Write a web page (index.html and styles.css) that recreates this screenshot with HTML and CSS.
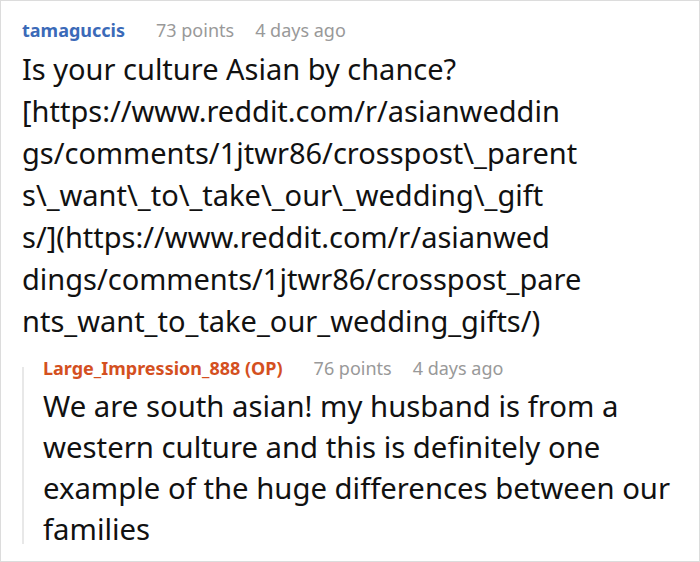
FILE: index.html
```html
<!DOCTYPE html>
<html lang="en">
<head>
<meta charset="utf-8">
<title>Comments</title>
<link rel="stylesheet" href="styles.css">
</head>
<body>
<div class="thread">
  <div class="comment">
    <div class="meta">
      <span class="author">tamaguccis</span>
      <span class="points">73 points</span>
      <span class="age">4 days ago</span>
    </div>
    <p class="body">Is your culture Asian by chance?<br>[https://www.reddit.com/r/asianweddin<br>gs/comments/1jtwr86/crosspost\_parent<br>s\_want\_to\_take\_our\_wedding\_gift<br>s/](https://www.reddit.com/r/asianwed<br>dings/comments/1jtwr86/crosspost_pare<br>nts_want_to_take_our_wedding_gifts/)</p>
  </div>
  <div class="comment reply">
    <div class="meta">
      <span class="author op">Large_Impression_888 (OP)</span>
      <span class="points">76 points</span>
      <span class="age">4 days ago</span>
    </div>
    <p class="body">We are south asian! my husband is from a western culture and this is definitely one example of the huge differences between our families</p>
  </div>
</div>
</body>
</html>
```

FILE: styles.css
```css
html, body {
  margin: 0;
  padding: 0;
  background: #fff;
}

.thread {
  box-sizing: border-box;
  width: 700px;
  height: 562px;
  border: 1px solid #dcdcdc;
  padding: 15px 21px 0 21px;
  font-family: "Noto Sans", "Open Sans", sans-serif;
  color: #111;
  overflow: hidden;
}

.meta {
  display: flex;
  align-items: baseline;
  font-size: 18px;
  line-height: 28px;
  color: #999;
}

.author {
  font-weight: bold;
  color: #3b6ab8;
  margin-right: 31px;
}

.author.op {
  color: #d4501f;
}

.points {
  margin-right: 21px;
}

.body {
  margin: 4px 0 0 0;
  font-size: 29px;
  line-height: 42px;
}

.reply {
  position: relative;
  margin-top: 12px;
  padding-left: 21px;
}

.reply .body {
  font-size: 29.3px;
  line-height: 41px;
}

/* thread line on the left of the nested reply */
.reply::before {
  content: "";
  position: absolute;
  left: 0;
  top: 13px;
  bottom: 6px;
  width: 2px;
  background: #e8e8e8;
}
```
